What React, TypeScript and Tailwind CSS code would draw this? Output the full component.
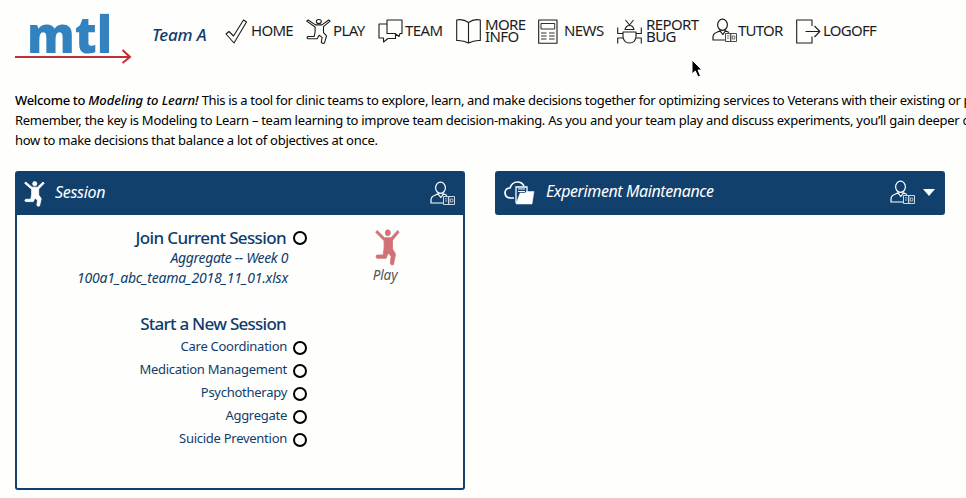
import type { ReactNode } from "react";

const FIGURE =
  "M1.600 .9L9 8H15.500L22.200 .9L23.600 2.600L17 10.500V19L19.600 23Q20.300 24.500 19.600 26L18 34Q16 35.400 14.800 33.200L15.600 26L12.600 23L10.600 28H1.400Q-.3 26.500 1.400 24.800H7.600L8.600 18V11L.2 2.600Z";

function Figure({ className, filled }: { className: string; filled?: boolean }) {
  return (
    <svg viewBox="-0.500 -0.500 25 36" preserveAspectRatio="none" className={className} fill={filled ? "currentColor" : "none"} stroke="currentColor" strokeWidth={filled ? 0.8 : 1.1} strokeLinejoin="round">
      <path d={FIGURE} vectorEffect="non-scaling-stroke" />
      <ellipse cx="12.300" cy="3.200" rx="2.500" ry="2.900" vectorEffect="non-scaling-stroke" />
    </svg>
  );
}

function Tutor({ className }: { className: string }) {
  return (
    <svg viewBox="0 0 26 26" className={className} fill="none" stroke="currentColor" strokeWidth="1.2" strokeLinejoin="round">
      <ellipse cx="10.5" cy="6.8" rx="4.9" ry="5.6" />
      <path d="M13 22H1V19Q1.200 15.500 4.500 14.500L8 12.800L10.800 16.500L13.500 12.800L17 14.500" />
      <g strokeWidth="1" opacity=".8">
        <path d="M13.500 15.500H18.700V23.500H13.500ZM18.700 15.500H24.500V23.500H18.700Z" />
        <path d="M15 17.800h2.300M15 20h2.300M20.300 18h2.500v3h-2.500z" strokeWidth=".8" />
      </g>
    </svg>
  );
}

function Line({ children }: { children: ReactNode }) {
  return (
    <svg viewBox="0 0 26 26" className="size-[26px] shrink-0" fill="none" stroke="currentColor" strokeWidth="1.1" strokeLinejoin="round">
      {children}
    </svg>
  );
}

function NavItem({ icon, label, width, text }: { icon: ReactNode; label: ReactNode; width: string; text: string }) {
  return (
    <a className={`flex h-[26px] shrink-0 items-center ${width}`}>
      <span className="flex w-[26px] shrink-0">{icon}</span>
      <span className={`whitespace-nowrap pb-0.5 text-[15px] leading-3 ${text}`}>{label}</span>
    </a>
  );
}

function Radio() {
  return <span className="size-[14px] shrink-0 rounded-full border-2 border-black" />;
}

const SESSIONS = ["Care Coordination", "Medication Management", "Psychotherapy", "Aggregate", "Suicide Prevention"];

export default function App() {
  return (
    <div className="relative h-[498px] w-[966px] overflow-hidden bg-[#fefefc] font-['Noto_Sans','Open_Sans',sans-serif] text-black">
      <header className="flex h-[90px] items-start">
        <div className="relative ml-[15px] h-[70px] w-[137px] shrink-0">
          <div className="ml-[12px] w-[100px] origin-left scale-x-[0.92] font-['Open_Sans',sans-serif] text-[52px] font-extrabold leading-[66px] text-[#3182be]">mtl</div>
          <svg className="absolute left-0 top-[48px] h-[17px] w-[118px]" viewBox="0 0 118 17" fill="none" stroke="#be3035" strokeWidth="2">
            <path d="M0 9H115M107.500 2L115 9L107.500 15" />
          </svg>
        </div>
        <div className="mt-[23px] w-[73px] shrink-0 whitespace-nowrap text-[17px] font-medium italic leading-6 tracking-[-0.15px] text-[#103c6c]">Team A</div>
        <nav className="mt-[18px] flex text-[#1c1c1c]">
          <NavItem width="w-[81px]" text="tracking-[-0.7px]" label="HOME" icon={<Line><path d="M1 16L4 13.500L8.500 18L18.500 2L21.500 4L9 25Z" /></Line>} />
          <NavItem width="w-[72px]" text="pl-px tracking-[-0.6px]" label="PLAY" icon={<Figure className="mt-px h-[25px] w-[25px]" />} />
          <NavItem width="w-[78px]" text="pl-px tracking-[-0.6px]" label="TEAM" icon={<Line><path d="M9 2H24V15.500H22L21 18.500L17 15.500H9ZM9 6H1V20H5.500V24L10 20.500H17.500V16" /></Line>} />
          <NavItem width="w-[82px]" text="pl-[3px] tracking-[-0.6px]" label={<>MORE<br />INFO</>} icon={<Line><path d="M12.500 4.500Q7 .5 .7 2V22.500Q7 22 12.500 25Q18 22 24.300 22.500V2Q18 .5 12.500 4.500V25" /></Line>} />
          <NavItem width="w-[79px]" text="tracking-[-0.6px]" label="NEWS" icon={<Line><path d="M.7 2H19V25.300H.7Z" /><path d="M3 5.500H16.700V11H3ZM3 15h5.500M11 15h5.700M3 18h5.500M11 18h5.700M3 21h5.500M11 21h5.700" strokeWidth=".9" /></Line>} />
          <NavItem width="w-[95px]" text="pl-[3px] tracking-[-0.6px]" label={<>REPORT<br />BUG</>} icon={<Line><path d="M6 14H19V19Q18 25 12.500 25Q7 25 6 19ZM8 11.500Q9 7.500 12.500 7.500Q16 7.500 17 11.500ZM8.500 2L12.500 7L16.500 2M6 15.500H.7V9.500M19 15.500H24.300V9.500M6 20H.7V25.500M19 20H24.300V25.500" /></Line>} />
          <NavItem width="w-[84px]" text="tracking-[-0.75px]" label="TUTOR" icon={<Tutor className="size-[26px]" />} />
          <NavItem width="w-[90px]" text="pl-px tracking-[-0.75px]" label="LOGOFF" icon={<Line><path d="M16 8V2H.7V25H16V18.500M9.500 13.500H23.500M18.500 8L23.800 13.500L18.500 19" /></Line>} />
        </nav>
      </header>

      <p className="ml-[15px] whitespace-nowrap text-[13px] leading-5 tracking-[-0.27px]">
        <span className="tracking-[-0.32px]">
          <span className="font-medium">Welcome to </span>
          <em className="font-medium tracking-[-0.02px]">Modeling to Learn!</em> This is a tool for clinic teams to explore, learn, and make decisions together for optimizing services to Veterans with their existing or potential
        </span>
        <br />
        <span className="tracking-[-0.29px]">Remember, the key is Modeling to Learn – team learning to improve team decision-making. As you and your team play and discuss experiments, you’ll gain deeper clarity</span>
        <br />
        how to make decisions that balance a lot of objectives at once.
      </p>

      <main className="ml-[15px] mt-[21px] flex items-start gap-[30px]">
        <section className="h-[319px] w-[450px] rounded-[3px] border-2 border-[#12406d] text-[#103c6c]">
          <div className="flex h-[42px] items-center bg-[#12406d] pl-[7px] pr-[7px] text-white">
            <Figure filled className="h-[26px] w-[21px]" />
            <h2 className="ml-[10px] flex-1 whitespace-nowrap pb-[4px] text-[16px] italic tracking-[-0.3px]">Session</h2>
            <Tutor className="size-[26px]" />
          </div>
          <div className="flex">
            <div className="w-[290px]">
              <div className="mt-[12px] flex h-[22px] items-center justify-end gap-[7px]">
                <h3 className="whitespace-nowrap pb-px text-[17px] font-medium tracking-[-0.63px]">Join Current Session</h3>
                <Radio />
              </div>
              <div className="-mt-px pr-[19px] text-right text-[14px] italic leading-5 tracking-[-0.35px]">
                <div>Aggregate -- Week 0</div>
                <div className="tracking-[-0.2px]">100a1_abc_teama_2018_11_01.xlsx</div>
              </div>
              <h3 className="mt-[25px] pr-[21px] text-right text-[17px] font-medium leading-[22px] tracking-[-0.74px]">Start a New Session</h3>
              <div className="mt-px">
                {SESSIONS.map((name) => (
                  <label key={name} className="flex h-[23px] items-center justify-end gap-[6px]">
                    <span className="whitespace-nowrap pb-0.5 text-[13px] tracking-[-0.27px]">{name}</span>
                    <Radio />
                  </label>
                ))}
              </div>
            </div>
            <button className="ml-[54px] mt-[14px] flex w-[48px] flex-col items-center text-[#555]">
              <Figure filled className="ml-[4px] h-[37px] w-[25px] text-[#d27277]" />
              <span className="-mt-px text-[13.5px] italic leading-5 tracking-[-0.1px]">Play</span>
            </button>
          </div>
        </section>

        <section className="flex h-[44px] w-[450px] items-center rounded-[3px] bg-[#12406d] pl-[9px] pr-[10px] text-white">
          <svg viewBox="0 0 31 26" className="h-[26px] w-[31px]" fill="none" stroke="currentColor" strokeWidth="1.7">
            <path d="M10 18H6Q1 17.500 1 12.500Q1.500 8 6 8Q8 2 13.500 2Q18 2 20 6" />
            <path d="M12 23V7H23V12" strokeWidth="1.300" />
            <path d="M14 9h7M14 11.500h7" strokeWidth="1.200" />
            <path d="M12 24L16 13H21L23 11.500H30L28 24Z" fill="currentColor" strokeWidth=".5" />
          </svg>
          <h2 className="ml-[11px] flex-1 whitespace-nowrap pb-[4px] text-[16px] italic tracking-[-0.4px]">Experiment Maintenance</h2>
          <Tutor className="size-[26px]" />
          <svg viewBox="0 0 12 7" className="ml-[7px] mb-[2px] h-[7px] w-[12px]" fill="currentColor"><path d="M0 0H12L6 7Z" /></svg>
        </section>
      </main>

      <svg className="absolute left-[691px] top-[59px] h-[19px] w-[13px]" viewBox="0 0 13 19" fill="#000" stroke="#fff" strokeWidth="1">
        <path d="M1 1V15L4.300 12L7 18L9.500 17L7 11H11Z" />
      </svg>
    </div>
  );
}
